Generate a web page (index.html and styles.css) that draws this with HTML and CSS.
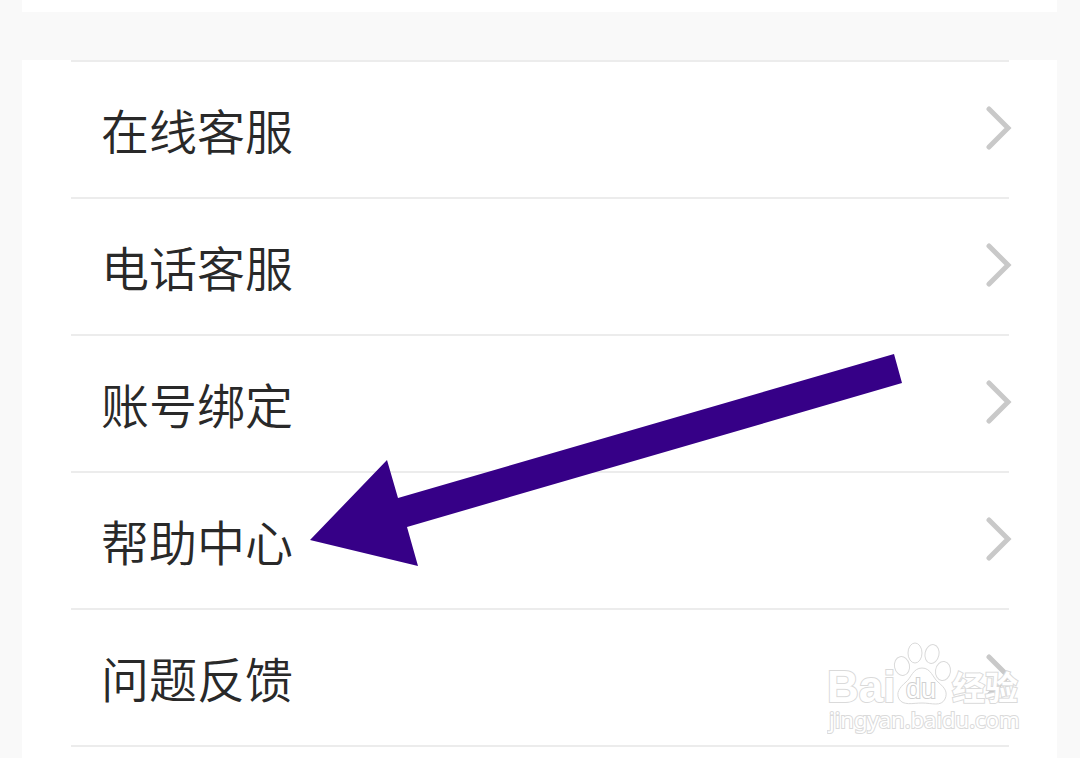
FILE: index.html
```html
<!DOCTYPE html>
<html lang="zh-CN">
<head>
<meta charset="utf-8">
<meta name="viewport" content="width=device-width, initial-scale=1">
<title>帮助中心</title>
<link rel="stylesheet" href="styles.css">
</head>
<body>
<main class="page">
  <section class="card card-previous"></section>
  <nav class="card menu">
    <ul class="menu-list">
      <li><a class="menu-item" href="#online"><span>在线客服</span><svg class="chevron" viewBox="0 0 26 44"><path d="M3 3 L22 22 L3 41"/></svg></a></li>
      <li><a class="menu-item" href="#phone"><span>电话客服</span><svg class="chevron" viewBox="0 0 26 44"><path d="M3 3 L22 22 L3 41"/></svg></a></li>
      <li><a class="menu-item" href="#account"><span>账号绑定</span><svg class="chevron" viewBox="0 0 26 44"><path d="M3 3 L22 22 L3 41"/></svg></a></li>
      <li><a class="menu-item" href="#help"><span>帮助中心</span><svg class="chevron" viewBox="0 0 26 44"><path d="M3 3 L22 22 L3 41"/></svg></a></li>
      <li><a class="menu-item" href="#feedback"><span>问题反馈</span><svg class="chevron" viewBox="0 0 26 44"><path d="M3 3 L22 22 L3 41"/></svg></a></li>
    </ul>
  </nav>
  <svg class="pointer" viewBox="0 0 592 213" aria-hidden="true">
    <path d="M0 187 L77 107 L88 145 L584 1 L592 30 L97 174 L108 213 Z"/>
  </svg>
  <svg class="watermark" viewBox="0 0 200 100" aria-hidden="true">
    <text class="mark-latin" x="0" y="62">Bai</text>
    <text class="mark-cjk" x="125" y="60">经验</text>
    <g class="paw">
      <ellipse cx="75" cy="26" rx="7.5" ry="9.5" transform="rotate(-12 75 26)"/>
      <ellipse cx="88" cy="13" rx="7" ry="10"/>
      <ellipse cx="105" cy="14" rx="7" ry="9.5" transform="rotate(12 105 14)"/>
      <ellipse cx="116" cy="31" rx="7.5" ry="9.5" transform="rotate(8 116 31)"/>
      <path d="M95 28 C86 28 84 38 79 42 C72 48 69 53 72 59 C76 66 86 63 95 63 C105 63 114 67 118 59 C121 52 118 48 111 42 C106 38 104 28 95 28 Z"/>
    </g>
    <text class="mark-du" x="79" y="58">du</text>
    <text class="mark-url" x="2" y="88">jingyan.baidu.com</text>
  </svg>
</main>
</body>
</html>
```
FILE: styles.css
```css
* {
  box-sizing: border-box;
}

body {
  margin: 0;
  background: #f9f9f9;
  color: #292929;
  font-family: "Noto Sans CJK SC", sans-serif;
}

.page {
  position: relative;
  min-height: 100vh;
  padding: 0 23px 0 22px;
  display: flex;
  flex-direction: column;
  gap: 48px;
  overflow: hidden;
}

.card {
  background: #fff;
}

.card-previous {
  height: 12px;
}

.menu {
  flex: 1;
  padding: 0 48px 0 49px;
}

.menu-list {
  margin: 0;
  padding: 0;
  list-style: none;
  border-top: 2px solid #ececec;
}

.menu-item {
  display: flex;
  align-items: center;
  justify-content: space-between;
  padding: 32px 0 33px 30px;
  border-bottom: 2px solid #ececec;
  color: inherit;
  font-size: 48px;
  font-weight: 350;
  line-height: 70px;
  text-decoration: none;
}

.chevron {
  width: 26px;
  height: 44px;
  margin: 0 -3px 2px 0;
  fill: none;
  stroke: #c9c9c9;
  stroke-width: 5;
  stroke-linecap: round;
}

.pointer {
  position: absolute;
  top: 353px;
  left: 310px;
  width: 592px;
  height: 213px;
  fill: #360087;
  pointer-events: none;
}

.watermark {
  position: absolute;
  top: 640px;
  right: 53px;
  width: 200px;
  height: 100px;
  fill: #fff;
  stroke: #dadada;
  stroke-width: 1;
  pointer-events: none;
}

.watermark text {
  font-family: "Liberation Sans", sans-serif;
  stroke-width: 2;
  paint-order: stroke;
}

.watermark .mark-latin {
  font-size: 44px;
  font-weight: 700;
}

.watermark .mark-cjk {
  font-family: "Noto Sans CJK SC", sans-serif;
  font-size: 33px;
  font-weight: 700;
}

.watermark .mark-du {
  font-size: 27px;
  font-weight: 400;
  stroke: #d0d0d0;
}

.watermark .mark-url {
  font-family: "Noto Sans", sans-serif;
  font-size: 22px;
}
```
